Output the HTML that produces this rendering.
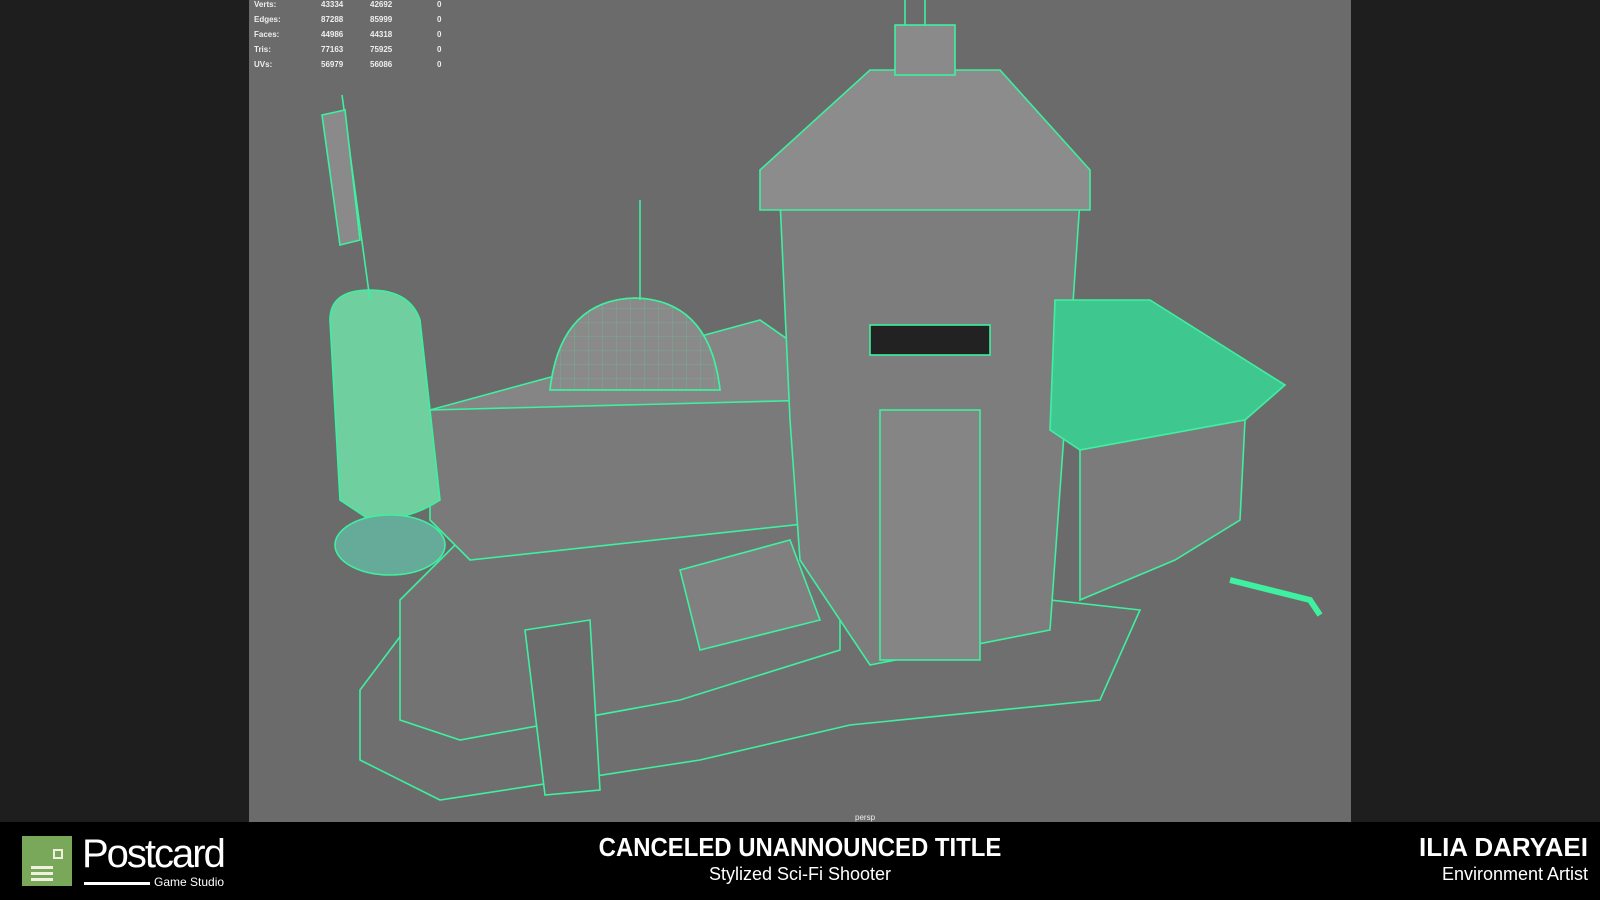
<!DOCTYPE html>
<html><head><meta charset="utf-8"><style>
html,body{margin:0;padding:0;width:1600px;height:900px;background:#1e1e1e;overflow:hidden;font-family:"Liberation Sans",sans-serif}
#vp{position:absolute;left:249px;top:0;width:1102px;height:822px;background:#6b6b6b;overflow:hidden}
#bar{position:absolute;left:0;top:822px;width:1600px;height:78px;background:#000}
.st{position:absolute;color:#eee;font-size:8px;font-weight:bold}
</style></head><body>
<div id="vp">
<svg width="1102" height="822" viewBox="249 0 1102 822" style="position:absolute;left:0;top:0">
<defs><pattern id="w" width="14" height="14" patternUnits="userSpaceOnUse"><path d="M0,0H14M0,0V14" stroke="#3ef0a0" stroke-width="0.6" fill="none" opacity="0.6"/></pattern></defs>
<g stroke="#3ef0a0" stroke-width="1.6" fill="#777">
<polygon points="360,690 420,610 780,570 1140,610 1100,700 850,725 700,760 440,800 360,760" fill="#6f6f6f"/>
<polygon points="400,600 460,540 840,500 840,650 680,700 460,740 400,720" fill="#737373"/>
<polygon points="430,410 820,390 850,430 840,520 470,560 430,520" fill="#7a7a7a"/>
<polygon points="430,410 760,320 860,390 820,400" fill="#858585"/>
<path d="M550,390 Q560,300 635,298 Q710,300 720,390 Z" fill="#8a8a8a"/>
<path d="M550,390 Q560,300 635,298 Q710,300 720,390 Z" fill="url(#w)"/>
<line x1="640" y1="200" x2="640" y2="300"/>
<polygon points="780,200 1080,200 1065,420 1050,630 870,665 800,560 790,420" fill="#7d7d7d"/>
<polygon points="760,170 870,70 1000,70 1090,170 1090,210 760,210" fill="#8c8c8c"/>
<rect x="895" y="25" width="60" height="50" fill="#8a8a8a"/>
<line x1="905" y1="0" x2="905" y2="25"/><line x1="925" y1="0" x2="925" y2="25"/>
<rect x="870" y="325" width="120" height="30" fill="#222"/>
<rect x="880" y="410" width="100" height="250" fill="#858585"/>
<polygon points="1055,300 1150,300 1285,385 1245,420 1080,450 1050,430" fill="#3ec890"/>
<polygon points="1080,450 1245,420 1240,520 1175,560 1080,600" fill="#7b7b7b"/>
<path d="M330,320 Q330,290 370,290 Q410,290 420,320 L440,500 Q410,520 370,520 L340,500 Z" fill="#6fcf9f"/>
<line x1="342" y1="95" x2="370" y2="300"/>
<polygon points="322,115 345,110 360,240 340,245" fill="#8a8a8a"/>
<ellipse cx="390" cy="545" rx="55" ry="30" fill="#6a9"/>
<polygon points="525,630 590,620 600,790 545,795" fill="#6c6c6c"/>
<polygon points="680,570 790,540 820,620 700,650" fill="#808080"/>
<path d="M1230,580 L1310,600 L1320,615" fill="none" stroke-width="6"/>
</g>
</svg>
<div class="st" style="left:5px;top:0">Verts:</div><div class="st" style="left:72px;top:0">43334</div><div class="st" style="left:121px;top:0">42692</div><div class="st" style="left:188px;top:0">0</div>
<div class="st" style="left:5px;top:15px">Edges:</div><div class="st" style="left:72px;top:15px">87288</div><div class="st" style="left:121px;top:15px">85999</div><div class="st" style="left:188px;top:15px">0</div>
<div class="st" style="left:5px;top:30px">Faces:</div><div class="st" style="left:72px;top:30px">44986</div><div class="st" style="left:121px;top:30px">44318</div><div class="st" style="left:188px;top:30px">0</div>
<div class="st" style="left:5px;top:45px">Tris:</div><div class="st" style="left:72px;top:45px">77163</div><div class="st" style="left:121px;top:45px">75925</div><div class="st" style="left:188px;top:45px">0</div>
<div class="st" style="left:5px;top:60px">UVs:</div><div class="st" style="left:72px;top:60px">56979</div><div class="st" style="left:121px;top:60px">56086</div><div class="st" style="left:188px;top:60px">0</div>
<div class="st" style="left:606px;top:813px;font-weight:normal;font-size:8px">persp</div>
</div>
<div id="bar">
<div style="position:absolute;left:22px;top:14px;width:50px;height:50px;background:#7aa85a">
<div style="position:absolute;left:31px;top:13px;width:6px;height:6px;border:2px solid #f0f0e0"></div>
<div style="position:absolute;left:9px;top:30px;width:22px;height:3px;background:#f0f0e0"></div>
<div style="position:absolute;left:9px;top:36px;width:22px;height:3px;background:#f0f0e0"></div>
<div style="position:absolute;left:9px;top:42px;width:22px;height:3px;background:#f0f0e0"></div>
</div>
<div style="position:absolute;left:82px;top:10px;color:#fff;font-size:40px;letter-spacing:-2px;line-height:44px">Postcard</div>
<div style="position:absolute;left:84px;top:60px;width:66px;height:3px;background:#fff"></div>
<div style="position:absolute;left:154px;top:53px;color:#fff;font-size:12px">Game Studio</div>
<div style="position:absolute;left:0;width:1600px;top:10px;text-align:center;color:#fff;font-size:26px;font-weight:bold;transform:scaleX(0.92)">CANCELED UNANNOUNCED TITLE</div>
<div style="position:absolute;left:0;width:1600px;top:42px;text-align:center;color:#fff;font-size:18px">Stylized Sci-Fi Shooter</div>
<div style="position:absolute;right:12px;top:10px;color:#fff;font-size:26px;font-weight:bold">ILIA DARYAEI</div>
<div style="position:absolute;right:12px;top:42px;color:#fff;font-size:18px">Environment Artist</div>
</div>
</body></html>
